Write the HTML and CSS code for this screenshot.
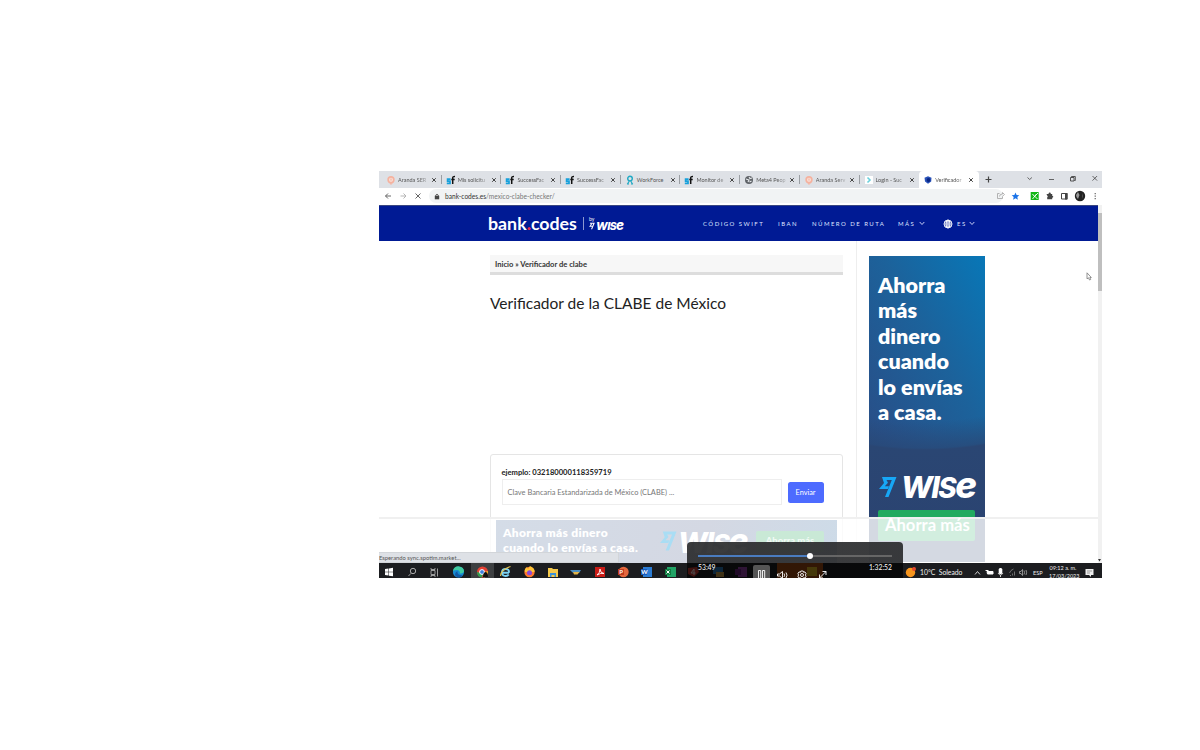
FILE: index.html
```
<!DOCTYPE html>
<html lang="es">
<head>
<meta charset="utf-8">
<title>Verificador de clabe</title>
<link rel="stylesheet" href="styles.css">
</head>
<body>
<svg class="defs" width="0" height="0">
  <symbol id="sf" viewBox="0 0 10 10"><path d="M4.600 4.200H1.600v1.900h2.400v2.200H.8" fill="none" stroke="#16a0db" stroke-width="1.700"/><path d="M6.700 9V3Q6.700 1.300 9 1.400M5.300 4.400H8.700" fill="none" stroke="#111" stroke-width="1.500"/></symbol>
  <symbol id="aranda" viewBox="0 0 10 10"><circle cx="5" cy="4.800" r="2.900" fill="#f9dcd3" stroke="#f5b29f" stroke-width="1.600"/><path d="M4 8l1 1.500L6.200 8M5 3.500v2" stroke="#f5b29f" fill="none"/></symbol>
  <symbol id="work" viewBox="0 0 10 10"><circle cx="5" cy="3.600" r="2.300" fill="none" stroke="#20a9c4" stroke-width="1.400"/><path d="M2.300 9.200L4.300 6M7.700 9.200L5.700 6M2 9h2M6 9h2" stroke="#20a9c4" stroke-width="1.200"/></symbol>
  <symbol id="globe" viewBox="0 0 10 10"><circle cx="5" cy="5" r="4" fill="#5f6368"/><path d="M2 4l3 1-1 2M5 2l1 1.500 2-.5M5.500 7l2-1" stroke="#e8eaed" fill="none" stroke-width="1.100"/></symbol>
  <symbol id="login" viewBox="0 0 10 10"><rect x="1" y="1" width="8" height="8" fill="#fff"/><path d="M3.500 2.500L6 5 3.500 7.500" fill="none" stroke="#6ad0dc" stroke-width="1.600"/></symbol>
  <symbol id="bank" viewBox="0 0 10 10"><path d="M5 1.300l3.500 1.500-.3 3.700L5 8.800 2 6.500l-.5-3.700z" fill="#2a52b8"/><circle cx="5.500" cy="5" r="1.900" fill="#0a2784"/></symbol>
  <symbol id="x" viewBox="0 0 6 6"><path d="M1.200 1.200l3.600 3.600M4.800 1.200L1.200 4.800" stroke="#444" stroke-width="1"/></symbol>
  <symbol id="flag" viewBox="0 0 18 22"><path d="M3 1H17.500L9.500 21H6L12.800 4H7.500L9 6.700 5.800 10.300H10L8.800 13H0L5 7z" fill="currentColor"/></symbol>
</svg>

<div class="screen">
  <div class="tabs">
    <div class="tab"><svg class="fav"><use href="#aranda"/></svg><span>Aranda SER</span><svg class="close"><use href="#x"/></svg></div>
    <div class="tab"><svg class="fav"><use href="#sf"/></svg><span>Mis solicitu</span><svg class="close"><use href="#x"/></svg></div>
    <div class="tab"><svg class="fav"><use href="#sf"/></svg><span>SuccessFac</span><svg class="close"><use href="#x"/></svg></div>
    <div class="tab"><svg class="fav"><use href="#sf"/></svg><span>SuccessFac</span><svg class="close"><use href="#x"/></svg></div>
    <div class="tab"><svg class="fav"><use href="#work"/></svg><span class="whole">WorkForce</span><svg class="close"><use href="#x"/></svg></div>
    <div class="tab"><svg class="fav"><use href="#sf"/></svg><span>Monitor de</span><svg class="close"><use href="#x"/></svg></div>
    <div class="tab"><svg class="fav"><use href="#globe"/></svg><span>Meta4 Peop</span><svg class="close"><use href="#x"/></svg></div>
    <div class="tab"><svg class="fav"><use href="#aranda"/></svg><span>Aranda Serv</span><svg class="close"><use href="#x"/></svg></div>
    <div class="tab last"><svg class="fav"><use href="#login"/></svg><span>Login - Suc</span><svg class="close"><use href="#x"/></svg></div>
    <div class="tab active"><svg class="fav"><use href="#bank"/></svg><span>Verificador</span><svg class="close"><use href="#x"/></svg></div>
    <svg class="winbtns" width="120" height="17" fill="none" stroke="#444"><path d="M6.500 8.500h6M9.500 5.500v6" stroke-width="1.2"/><path d="M48.500 6.500l2.200 2 2.200-2M70 8.500h5" stroke-width=".8"/><path d="M91.500 6.500h3.500v3.500h-3.500zM92.500 6.500v-1h3.800v4h-1" stroke-width=".9"/><path d="M113.500 5l4.600 4.600M118.100 5l-4.600 4.600" stroke-width=".8"/></svg>
  </div>

  <div class="toolbar">
    <svg width="50" height="16" fill="none" stroke="#666"><path d="M12 8H6.500M9 5.500L6.500 8 9 10.500" /><path d="M21.500 8H27M24.500 5.500L27 8l-2.500 2.500" stroke="#b5b5b5"/><path d="M36.500 5.500l5 5M41.500 5.500l-5 5"/></svg>
    <div class="omnibox">
      <svg width="6" height="7"><rect x=".8" y="2.800" width="4.400" height="3.500" fill="#444"/><path d="M1.800 3V2q1.200-1.800 2.400 0v1" fill="none" stroke="#444" stroke-width=".8"/></svg>
      <span>bank-codes.es<i>/mexico-clabe-checker/</i></span>
    </div>
    <svg class="ext" width="107" height="17"><path d="M4.500 5.500h-2v5h5v-2M4.500 8.500q0-2.500 3-2.500V4.500L9.500 6.500 7.500 8.200" fill="none" stroke="#aaa" stroke-width=".9"/><path d="M20.500 4.500l1.100 2.500 2.700.2-2 1.800.6 2.700-2.400-1.400-2.400 1.400.6-2.700-2-1.800 2.700-.2z" fill="#1a73e8"/><rect x="35.700" y="4" width="8" height="8" fill="#12b716"/><path d="M37.500 6l2 2.500L43 5M37.500 11l4-5M39.500 8l3 3" stroke="#fff" fill="none" stroke-width=".9"/><circle cx="54.500" cy="8" r="6.500" fill="#fff"/><path d="M51.500 6h2q0-2 1.500-1.500 1 .2.800 1.500h1.400v1.700q1.400.2 1 1.300-.2.700-1 .7v1.500h-5v-2q1.300-.5 0-1.700z" fill="#444"/><path d="M66.500 5.500h5.500v5.500h-5.500z" fill="#fff" stroke="#444"/><path d="M70 5h2.500v6.500H70z" fill="#444"/><circle cx="85" cy="8" r="5.200" fill="#222"/><path d="M83 4l1.500 3-1.500 4q-2-2-2-4z" fill="#999"/><path d="M87 5l1 3-1 3" fill="#555"/><path d="M100.200 5v1.300M100.200 7.500v1.300M100.200 10v1.300" stroke="#555" stroke-width="1.100"/></svg>
  </div>

  <div class="view">
    <div class="page">
      <header class="site">
        <div class="brand">bank<b>.</b>codes</div>
        <div class="by"><small>by</small><svg width="6" height="8"><use href="#flag"/></svg></div>
        <div class="wise mini">WI<em>S</em><i>e</i></div>
        <nav>
          <span class="n1">CÓDIGO SWIFT</span><span class="n2">IBAN</span><span class="n3">NÚMERO DE RUTA</span><span class="n4">MÁS</span>
          <svg class="chev" width="6" height="5"><path d="M.7 1l2.300 2.500L5.300 1" stroke="#dfe3ff" fill="none" stroke-width=".9"/></svg>
          <svg class="world" width="10" height="10" fill="none" stroke="#fff" stroke-width=".9"><circle cx="5" cy="5" r="4"/><ellipse cx="5" cy="5" rx="1.900" ry="4"/><path d="M1 5h8M5 1v8M1.800 2.900h6.400M1.800 7.100h6.400"/></svg>
          <span class="n5">ES</span>
          <svg class="chev" width="6" height="5"><path d="M.7 1l2.300 2.500L5.300 1" stroke="#dfe3ff" fill="none" stroke-width=".9"/></svg>
        </nav>
      </header>
      <div class="body">
        <main>
          <div class="crumbs">Inicio » Verificador de clabe</div>
          <h1>Verificador de la CLABE de México</h1>
          <div class="card">
            <label>ejemplo: 032180000118359719</label>
            <div class="row"><div class="input">Clave Bancaria Estandarizada de México (CLABE) ...</div><div class="send">Enviar</div></div>
          </div>
        </main>
        <aside>
          <div class="ad">
            <p>Ahorra<br>más<br>dinero<br>cuando<br>lo envías<br>a casa.</p>
            <div class="adlogo"><svg width="18" height="22"><use href="#flag"/></svg><div class="wise">WI<em>S</em><i>e</i></div></div>
            <div class="cta"></div>
          </div>
        </aside>
      </div>
    </div>
    <div class="scroll"><div class="thumb"></div><svg width="4" height="5"><path d="M0 1h3L1.500 3.500z" fill="#333"/></svg></div>
    <div class="sticky">
      <div class="banner">
        <p>Ahorra más dinero<br>cuando lo envías a casa.</p>
        <svg width="17" height="22"><use href="#flag"/></svg><div class="wise">WI<em>S</em><i>e</i></div>
        <div class="bcta">Ahorra más</div>
      </div>
      <span class="ctatext">Ahorra más</span>
    </div>
    <div class="status">Esperando sync.spotim.market...</div>
    <svg class="cursor" width="7" height="10"><path d="M1 .8v6l1.500-1 1 2.200 1.200-.5-.9-2H5.300z" fill="#fff" stroke="#777" stroke-width=".8"/></svg>
  </div>

  <div class="taskbar">
    <svg width="528" height="15">
      <rect x="92" width="23" height="15" fill="#3d3f41"/>
      <path d="M6 6l3.500-.5v3.300H6zM10 5.400l4-.6v4h-4zM6 9.300h3.500v3.300L6 12zM10 9.300h4v4l-4-.6z" fill="#fff"/>
      <g fill="none" stroke="#aaa"><circle cx="34" cy="8" r="2.700"/><path d="M32 10.300L29.500 13M52 7.500h4v4h-4zM58.500 5.500v8M52 5v1.500h4V5M52 14v-1.500h4V14" stroke-width=".9"/></g>
      <circle cx="79.500" cy="9" r="5.600" fill="#168bd2"/><path d="M74 8q1-5 6-4.600 5 .6 5 5-1 2.500-4 2 0-3.500-3-3.500-3 0-4 1.100z" fill="#41cba0"/><path d="M78.500 8q-1 4 5.500 4.500-4 3.500-7.500.5-1.500-3 2-5z" fill="#1258a5"/>
      <circle cx="103.500" cy="9" r="5.500" fill="#e54134"/><path d="M98 9q0 5 5 5.500l1-4z" fill="#2e9e4f"/><path d="M109 8q0 5-4 6.500l-1-5z" fill="#f2c02d"/><circle cx="103" cy="9" r="2.400" fill="#3c7dde" stroke="#fff"/><path d="M104 14q0-5 3-5 2 1 2 5z" fill="#111"/>
      <path d="M130 9.800h-6.500M130 9.800q.3-3.800-3.300-3.800-3.700 0-3.700 3.500 0 3.500 3.700 3.500 2 0 3-1.500" fill="none" stroke="#7bd3f5" stroke-width="1.900"/><path d="M121.500 13q0-6 10-9.500" fill="none" stroke="#e8c44c" stroke-width="1.100"/>
      <circle cx="150.500" cy="9" r="5.200" fill="#ff762d"/><path d="M146 9q-1-3 2-5l1 2 2-3q5 2 4.500 6z" fill="#ffc438"/><circle cx="150.500" cy="9.800" r="2.500" fill="#8b4ad8"/>
      <path d="M169 5h4l1 1h5v8h-10z" fill="#f4c84b"/><path d="M171 10h6v4h-1.500v-2h-3v2H171z" fill="#3a91d8"/>
      <path d="M191 7h11l-1.500 2.500h-7z" fill="#4b8fc4"/><path d="M194 9h6.500l-2 2.500H195z" fill="#e2b44a"/>
      <rect x="216" y="4" width="10" height="10" fill="#c91c17"/><path d="M218 12q3-2 3-6 0 4 4 4.500-3-1-7 1.500" stroke="#fff" fill="none" stroke-width=".9"/>
      <circle cx="244.500" cy="9" r="5.200" fill="#e4673d"/><rect x="239" y="6" width="6" height="6" fill="#bf3b1e"/>
      <rect x="264" y="4" width="9" height="10" fill="#2b7cd3"/><rect x="262" y="6" width="6" height="6" fill="#185abd"/>
      <rect x="288" y="4" width="9" height="10" fill="#21a366"/><rect x="286" y="6" width="6" height="6" fill="#107c41"/><path d="M287.500 7.500l3 3M290.500 7.500l-3 3" stroke="#fff"/>
      <path d="M309 5l9-1 2 5-5 5-6-3z" fill="#d23b34"/><path d="M315 12V6l-3 4h4.500" fill="none" stroke="#fff"/><rect x="334" y="4" width="10" height="7" fill="#277bc0"/><rect x="337" y="9" width="8" height="5" fill="#d2a64b"/><rect x="359" y="4" width="9" height="10" fill="#9b42b2"/><rect x="356" y="6" width="6" height="6" fill="#6b2282"/>
      <rect x="398" y="0" width="46" height="15" fill="#a74c12"/><rect x="428" y="4" width="10" height="9" fill="#e6bd22"/>
      <text x="240.300" y="11.300" class="let">P</text><text x="262.300" y="11.300" class="let">W</text>
    </svg>
    <div class="weather"><svg width="12" height="12"><circle cx="5.500" cy="6.500" r="4.700" fill="#f7951d"/><circle cx="9" cy="3" r="2" fill="#e6482e"/></svg><span>10°C&nbsp; Soleado</span></div>
    <svg class="tray" width="54" height="15" fill="none" stroke="#ccc"><path d="M1 10.500l2.500-3L6 10.500"/><path d="M13 7.500h6v2.500h-5.500zM11.500 6.500h3" fill="#fff" stroke="#fff"/><rect x="24.700" y="4" width="3.600" height="6" rx="1.500" fill="#fff" stroke="none"/><path d="M24 9q2.500 4 5 0M26.500 11v2"/><path d="M36 11.500h1M38.500 11.500v-2M40.500 11.500v-4M35.500 9q1-3 4-4" stroke="#777" stroke-width=".9"/><path d="M45.500 7.500h1.500l1.500-2v6l-1.500-2h-1.500zM50 6.500q1 2 0 4M52 6q1.200 2.500 0 5" stroke-width=".8" stroke="#aaa"/></svg>
    <span class="lang">ESP</span>
    <div class="clock">09:12 a. m.<br>17/03/2023</div>
    <svg class="note" width="9" height="10"><path d="M.5 1h8v6H6v2L4 7H.5z" fill="#eee"/><path d="M2 3h5M2 5h3" stroke="#777" stroke-width=".7"/></svg>
  </div>

  <div class="player">
    <div class="track"><div class="done"></div><div class="knob"></div></div>
    <div class="times"><span>53:49</span><span>1:32:52</span></div>
    <svg class="ctrls" width="80" height="15" fill="none" stroke="#fff" stroke-width=".9"><rect width="17" height="15" rx="2" fill="#555" stroke="none"/><path d="M5.500 15V5.500h2.200V15M9.500 15V5.500h2.200V15"/><path d="M24.500 9h2l3-2.500v7l-3-2.500h-2zM31 8.500q1.200 1.700 0 3.500M33 7.500q2 2.700 0 5.500"/><circle cx="49" cy="10" r="1.500"/><path d="M47.800 6h2.400l.4 1.300 1.400-.4 1.200 2-1 1.100 1 1.100-1.200 2-1.400-.4-.4 1.300h-2.400l-.4-1.300-1.400.4-1.200-2 1-1.100-1-1.100 1.200-2 1.400.4z"/><path d="M66.500 13l6.500-6.500M69.500 6.500H73V10M66.500 9.500V13H70"/></svg>
  </div>
</div>
</body>
</html>
```
FILE: styles.css
```
body { margin: 0; background: #fff; font-family: Lato, sans-serif; }
.defs { position: absolute; }
svg { display: block; flex: none; }
.screen { position: relative; width: 723px; height: 407px; margin: 171px 0 0 379px; display: flex; flex-direction: column; overflow: hidden; white-space: nowrap; }

.tabs { height: 17px; display: flex; background: #dee1e6; padding-left: 3px; flex: none; }
.tab { width: 59.7px; box-sizing: border-box; display: flex; align-items: center; padding-left: 4px; position: relative; }
.tab::after { content: ""; position: absolute; right: 0; top: 4px; height: 9px; width: 1px; background: #9a9ea3; }
.tab.last::after, .tab.active::after { display: none; }
.tab.active { background: #fff; border-radius: 4px 4px 0 0; }
.fav { width: 10px; height: 10px; }
.tab span { width: 31px; margin-left: 2px; font: 5.500px/10px Lato, sans-serif; color: #555; -webkit-mask-image: linear-gradient(90deg, #000 65%, rgba(0,0,0,.15)); mask-image: linear-gradient(90deg, #000 65%, rgba(0,0,0,.15)); }
.tab .whole { -webkit-mask-image: none; mask-image: none; }
.close { width: 6px; height: 6px; margin-left: 2px; }

.toolbar { height: 17px; display: flex; background: #fff; flex: none; }
.omnibox { flex: 1; height: 14px; margin: 1px -6px 0 0; border-radius: 7px; background: #f1f3f4; display: flex; align-items: center; gap: 5px; padding-left: 5px; font-size: 6.600px; color: #333; }
.omnibox i { font-style: normal; color: #777; }
.ext { margin-left: -2px; }

.view { position: relative; height: 358px; display: flex; flex: none; }
.page { width: 719px; overflow: hidden; }
.site { height: 36px; background: #001a94; border-top: 1px solid #3a4780; box-sizing: border-box; display: flex; align-items: center; padding-left: 109px; color: #fff; }
.brand { width: 96px; box-sizing: border-box; height: 13px; line-height: 13px; font-size: 17.800px; font-weight: 700; border-right: 1px solid #8c98d0; }
.brand b { color: #f0284c; }
.by { width: 7px; margin-left: 5px; line-height: 5px; }
.by small { font-size: 5px; display: block; }
.wise { font: italic 800 30px/29px Inter, sans-serif; color: #fff; display: flex; align-items: baseline; letter-spacing: -1.500px; }
.wise em { font-size: .93em; }
.wise i { font-size: 1.22em; }
.mini { font-size: 11px; line-height: 14px; letter-spacing: -.5px; width: 28px; margin-top: 3px; }
nav { display: flex; align-items: center; margin-left: 79px; font-size: 6px; letter-spacing: 1.450px; color: #dfe3ff; }
.n1 { width: 75px; } .n2 { width: 34px; } .n3 { width: 86px; } .n4 { width: 21px; } .n5 { width: 12px; }
.world { margin: 0 4px 0 18px; }
.body { display: flex; height: 322px; background: #fff; }
main { width: 353px; padding-left: 111px; padding-right: 13px; border-right: 1px solid #eee; flex: none; }
.crumbs { height: 17px; margin-top: 14px; background: #f7f7f7; border-bottom: 3px solid #ddd; padding-left: 5px; font-size: 7.600px; line-height: 18px; font-weight: 700; color: #333; }
h1 { font-size: 15.500px; line-height: 20px; font-weight: 400; margin: 18px 0 0; color: #222; height: 160px; }
.card { height: 120px; box-sizing: border-box; border: 1px solid #e5e5e5; border-radius: 3px; padding: 12px 0 0 10.500px; margin-top: 1px; }
.card label { display: block; font-size: 7.600px; line-height: 10px; font-weight: 700; color: #222; }
.row { display: flex; align-items: center; gap: 6px; margin-top: 2px; }
.input { width: 280px; height: 26px; box-sizing: border-box; border: 1px solid #eee; padding-left: 5px; font-size: 7.450px; line-height: 25px; color: #777; }
.send { width: 36px; height: 21px; line-height: 21px; border-radius: 2.500px; background: #4d6bff; color: #fff; text-align: center; font-size: 7.300px; margin-top: 1px; }
.ad { margin: 15px 0 0 12px; width: 116px; height: 306px; box-sizing: border-box; padding: 17px 0 0 9px; background: radial-gradient(circle at 55px -160px, rgba(42,70,116,0) 325px, rgba(41,72,118,.75) 352px, #2a4673 354px, #2b4270 480px), linear-gradient(240deg, #0877b7, #1c629b 35%, #27518a 70%, #2a4674); }
.ad p { margin: 0; font-size: 21.500px; line-height: 25.400px; font-weight: 800; color: #fff; }
.adlogo { display: flex; align-items: center; color: #17a7f6; margin-top: 50px; height: 23px; gap: 4px; padding-left: 1px; }
.cta { width: 97px; height: 31px; margin-top: 12px; background: #22aa5f; border-radius: 2px; }

.scroll { width: 4px; background: #f1f1f1; display: flex; flex-direction: column; justify-content: space-between; }
.thumb { height: 78px; margin-top: 8px; background: #bfbfbf; }
.sticky { position: absolute; left: 0; top: 312px; width: 719px; height: 46px; box-sizing: border-box; border-top: 2px solid #f0f0f0; background: rgba(255,255,255,.8); }
.banner { width: 341px; height: 43px; margin: 1px 0 0 117px; padding-left: 7px; box-sizing: border-box; display: flex; align-items: flex-start; background: linear-gradient(110deg, #d4dce7, #d4d8e3 60%, #cddbe8); color: #a9ddf4; }
.banner p { width: 157px; margin: 5px 0 0; font-size: 12px; line-height: 15px; font-weight: 800; letter-spacing: .3px; color: #fff; flex: none; }
.banner svg { margin-top: 10px; }
.banner .wise { margin: 6px 0 0 1px; width: 78px; font-size: 28px; }
.bcta { width: 68px; height: 21px; margin-top: 11px; border-radius: 2px; line-height: 20px; text-align: center; font-size: 9.500px; font-weight: 700; color: #f3fbf6; background: #c9e9d6; }
.ctatext { position: absolute; left: 506px; top: -1px; font-size: 16.600px; line-height: 15px; font-weight: 700; color: #fff; }
.status { position: absolute; left: 0; top: 347px; width: 239px; height: 9px; background: #dee1e6; border: 1px solid #d2d5d9; border-left: 0; font-size: 5.800px; line-height: 9px; color: #555; }
.cursor { position: absolute; left: 707px; top: 67px; }

.taskbar { height: 15px; background: #1c1d20; display: flex; overflow: hidden; flex: none; color: #eee; }
.let { font: 700 6px Lato, sans-serif; fill: #fff; }
.weather { display: flex; align-items: center; flex: none; width: 68px; gap: 3px; font-size: 6.800px; padding-top: 3px; margin-left: -2px; }
.tray { margin-left: 1px; margin-top: 1px; }
.lang { font-size: 5.600px; line-height: 19px; margin-left: 5px; width: 16px; }
.clock { font-size: 5.500px; line-height: 8px; padding-top: 1px; width: 28px; text-align: center; }
.note { margin: 5px 0 0 8px; }

.player { position: absolute; left: 308px; top: 371px; width: 216px; height: 36px; border-radius: 4px 4px 0 0; background: linear-gradient(rgba(42,43,45,.92) 0 21px, rgba(0,0,0,.7) 21px); color: #fff; }
.track { position: relative; margin: 13px 11px 0; height: 2px; background: #666; }
.done { width: 112px; height: 2px; background: #4a7cc0; }
.knob { position: absolute; left: 109px; top: -2px; width: 6px; height: 6px; border-radius: 50%; background: #fff; }
.times { display: flex; justify-content: space-between; margin: 6px 11px 0; font-size: 6.800px; line-height: 9px; }
.ctrls { position: absolute; left: 66px; top: 23px; }
```
